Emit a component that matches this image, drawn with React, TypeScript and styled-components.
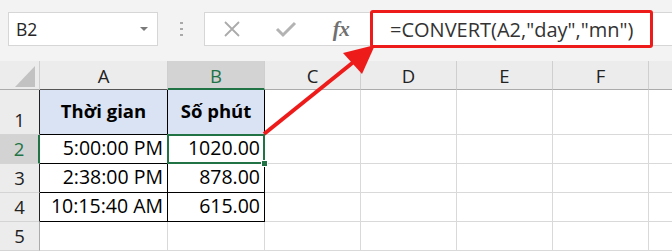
import React from "react";
import styled, { createGlobalStyle, css } from "styled-components";

const Global = createGlobalStyle`
  html, body { margin: 0; padding: 0; background: #ffffff; }
  body { font-family: "Open Sans", "Liberation Sans", sans-serif; }
`;

const GREEN = "#217346";
const FONT = `"Open Sans", "Liberation Sans", sans-serif`;

const Page = styled.div`
  position: relative;
  width: 672px;
  height: 251px;
  overflow: hidden;
  background: #ffffff;
`;

const Toolbar = styled.div`
  display: flex;
  align-items: flex-start;
  box-sizing: border-box;
  height: 61px;
  padding: 12px 0 0 8px;
  background: #f3f3f3;
`;

const NameBox = styled.div`
  box-sizing: border-box;
  width: 150px;
  height: 34px;
  display: flex;
  align-items: center;
  justify-content: space-between;
  padding: 0 9px 0 7px;
  background: #ffffff;
  border: 1px solid #d6d6d6;
  font-family: ${FONT};
  font-size: 17.5px;
  color: #262626;
`;

const Caret = styled.span`
  width: 0;
  height: 0;
  border-left: 4px solid transparent;
  border-right: 4px solid transparent;
  border-top: 4px solid #7a7a7a;
`;

const Splitter = styled.div`
  width: 46px;
  height: 34px;
  display: flex;
  flex-direction: column;
  align-items: center;
  justify-content: center;
  gap: 4px;
`;

const Dot = styled.span`
  width: 3px;
  height: 2px;
  background: #a9a9a9;
`;

const FormulaBar = styled.div`
  flex: 1;
  box-sizing: border-box;
  height: 34px;
  display: flex;
  align-items: center;
  background: #ffffff;
  border: 1px solid #d6d6d6;
  border-right: none;
`;

const IconButton = styled.div`
  width: 54px;
  height: 32px;
  display: flex;
  align-items: center;
  justify-content: center;
`;

const Fx = styled.span`
  font-family: "Liberation Serif", serif;
  font-style: italic;
  font-weight: 700;
  font-size: 21px;
  color: #707070;
  letter-spacing: -0.5px;
  padding-left: 2px;
`;

const FormulaInput = styled.div`
  flex: 1;
  padding-left: 23px;
  font-family: ${FONT};
  font-size: 20px;
  color: #333333;
  white-space: nowrap;
`;

const Sheet = styled.div`
  display: grid;
  grid-template-columns: 40px 128px 97px 96px 96px 96px 96px 96px;
  grid-template-rows: 29px 45px 29px 29px 29px 29px;
  font-family: ${FONT};
`;

const Corner = styled.div`
  box-sizing: border-box;
  background: #ececec;
  border-right: 1px solid #cfcfcf;
  border-bottom: 1px solid #ababab;
  display: flex;
  align-items: flex-end;
  justify-content: flex-end;
  padding: 0 4px 2px 0;
`;

const CornerMark = styled.div`
  width: 20px;
  height: 21px;
  background: #c2c2c2;
  clip-path: polygon(100% 0, 100% 100%, 0 100%);
`;

const ColHead = styled.div<{ $sel?: boolean; $edge?: boolean }>`
  box-sizing: border-box;
  display: flex;
  align-items: flex-end;
  justify-content: center;
  padding-bottom: 1px;
  background: #ececec;
  border-right: 1px solid #cfcfcf;
  border-bottom: 1px solid ${(p) => (p.$edge ? "#555555" : "#ababab")};
  font-size: 18.5px;
  color: #222222;
  ${(p) =>
    p.$sel &&
    css`
      background: #d3d3d3;
      color: ${GREEN};
      border-bottom: 2px solid ${GREEN};
      padding-bottom: 0;
    `}
`;

const RowHead = styled.div<{ $sel?: boolean; $edge?: boolean }>`
  box-sizing: border-box;
  display: flex;
  align-items: flex-end;
  justify-content: center;
  padding-bottom: 2px;
  background: #ececec;
  border-right: 1px solid ${(p) => (p.$edge ? "#222222" : "#ababab")};
  border-bottom: 1px solid #d4d4d4;
  font-size: 18.5px;
  color: #222222;
  ${(p) =>
    p.$sel &&
    css`
      background: #d3d3d3;
      color: ${GREEN};
      border-right: 2px solid ${GREEN};
    `}
`;

const Cell = styled.div<{
  $table?: boolean;
  $head?: boolean;
  $sel?: boolean;
}>`
  position: relative;
  box-sizing: border-box;
  display: flex;
  align-items: flex-end;
  justify-content: flex-end;
  padding: 0 4px 2px 0;
  background: #ffffff;
  border-right: 1px solid #d9d9d9;
  border-bottom: 1px solid #d9d9d9;
  font-size: 19.5px;
  color: #000000;
  white-space: nowrap;
  ${(p) =>
    p.$table &&
    css`
      border-right-color: #000000;
      border-bottom-color: #000000;
    `}
  ${(p) =>
    p.$head &&
    css`
      background: #dae3f3;
      align-items: center;
      justify-content: center;
      padding: 0 0 3px 0;
      font-size: 18.5px;
      font-weight: 700;
    `}
  ${(p) =>
    p.$sel &&
    css`
      z-index: 2;
      &::after {
        content: "";
        position: absolute;
        left: -1px;
        top: -1px;
        right: -1px;
        bottom: -1px;
        border: 2px solid ${GREEN};
      }
      &::before {
        content: "";
        position: absolute;
        right: -4px;
        bottom: -4px;
        width: 5px;
        height: 5px;
        background: ${GREEN};
        border: 1px solid #ffffff;
        z-index: 3;
      }
    `}
`;

const Annotation = styled.div`
  position: absolute;
  left: 370px;
  top: 10px;
  width: 283px;
  height: 38px;
  box-sizing: border-box;
  border: 3px solid #ee1b1b;
  border-radius: 3px;
  pointer-events: none;
`;

const ArrowLayer = styled.svg`
  position: absolute;
  left: 0;
  top: 0;
  pointer-events: none;
`;

const columns = ["A", "B", "C", "D", "E", "F", "G"];

const rows: { n: number; a?: string; b?: string }[] = [
  { n: 1, a: "Thời gian", b: "Số phút" },
  { n: 2, a: "5:00:00 PM", b: "1020.00" },
  { n: 3, a: "2:38:00 PM", b: "878.00" },
  { n: 4, a: "10:15:40 AM", b: "615.00" },
  { n: 5 },
];

export default function App() {
  return (
    <Page>
      <Global />
      <Toolbar>
        <NameBox>
          <span>B2</span>
          <Caret />
        </NameBox>
        <Splitter>
          <Dot />
          <Dot />
          <Dot />
        </Splitter>
        <FormulaBar>
          <IconButton>
            <svg width="18" height="18" viewBox="0 0 18 18">
              <path d="M2 2 L16 16 M16 2 L2 16" stroke="#ababab" strokeWidth="1.8" fill="none" />
            </svg>
          </IconButton>
          <IconButton>
            <svg width="22" height="18" viewBox="0 0 22 18">
              <path d="M2 9 L8 15 L20 3" stroke="#b3b3b3" strokeWidth="3" fill="none" />
            </svg>
          </IconButton>
          <IconButton>
            <Fx>fx</Fx>
          </IconButton>
          <FormulaInput>=CONVERT(A2,"day","mn")</FormulaInput>
        </FormulaBar>
      </Toolbar>
      <Sheet>
        <Corner>
          <CornerMark />
        </Corner>
        {columns.map((c) => (
          <ColHead key={c} $sel={c === "B"} $edge={c === "A"}>
            {c === "G" ? "" : c}
          </ColHead>
        ))}
        {rows.map((r) => (
          <React.Fragment key={r.n}>
            <RowHead $sel={r.n === 2} $edge={r.n <= 4}>
              {r.n}
            </RowHead>
            {columns.map((c) => {
              const inTable = r.n <= 4 && (c === "A" || c === "B");
              const text = c === "A" ? r.a : c === "B" ? r.b : undefined;
              return (
                <Cell
                  key={c}
                  $table={inTable}
                  $head={inTable && r.n === 1}
                  $sel={c === "B" && r.n === 2}
                >
                  {text}
                </Cell>
              );
            })}
          </React.Fragment>
        ))}
      </Sheet>
      <Annotation />
      <ArrowLayer width="672" height="251" viewBox="0 0 672 251">
        <line x1="264" y1="134" x2="356" y2="60" stroke="#ee1b1b" strokeWidth="4" />
        <polygon points="375,45 343,53 362,74" fill="#ee1b1b" />
      </ArrowLayer>
    </Page>
  );
}
